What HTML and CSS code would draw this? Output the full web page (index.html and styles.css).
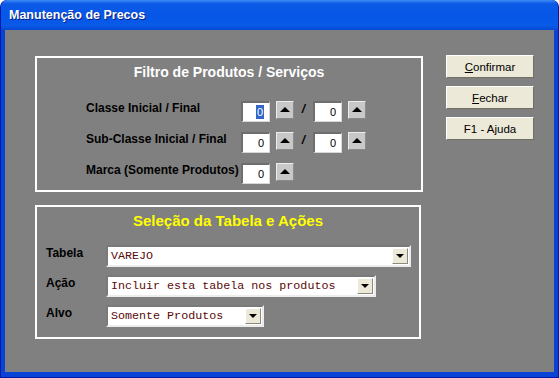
FILE: index.html
```html
<!DOCTYPE html>
<html lang="pt-BR">

<head>
    <meta charset="UTF-8">
    <title>Manutenção de Precos</title>
    <link rel="stylesheet" href="styles.css">
</head>

<body>
    <div class="janela">
        <div class="barra-titulo">Manutenção de Precos</div>

        <div class="cliente">
            <div class="principal">
                <!-- filtro -->
                <div class="painel painel-filtro">
                    <div class="titulo-painel">Filtro de Produtos / Serviços</div>
                    <div class="linhas-filtro">
                        <div class="linha">
                            <span class="rotulo">Classe Inicial / Final</span>
                            <div class="controles">
                                <div class="campo"><span class="selecionado">0</span></div>
                                <button class="seta"><span class="tri-cima"></span></button>
                                <span class="barra">/</span>
                                <div class="campo">0</div>
                                <button class="seta"><span class="tri-cima"></span></button>
                            </div>
                        </div>
                        <div class="linha">
                            <span class="rotulo">Sub-Classe Inicial / Final</span>
                            <div class="controles">
                                <div class="campo">0</div>
                                <button class="seta"><span class="tri-cima"></span></button>
                                <span class="barra">/</span>
                                <div class="campo">0</div>
                                <button class="seta"><span class="tri-cima"></span></button>
                            </div>
                        </div>
                        <div class="linha">
                            <span class="rotulo">Marca (Somente Produtos)</span>
                            <div class="controles">
                                <div class="campo">0</div>
                                <button class="seta"><span class="tri-cima"></span></button>
                            </div>
                        </div>
                    </div>
                </div>

                <!-- tabela e acoes -->
                <div class="painel painel-tabela">
                    <div class="titulo-painel amarelo">Seleção da Tabela e Ações</div>
                    <div class="linhas-tabela">
                        <div class="linha">
                            <span class="rotulo">Tabela</span>
                            <div class="combo combo-tabela">
                                <span class="texto-combo">VAREJO</span>
                                <span class="botao-combo"><span class="tri-baixo"></span></span>
                            </div>
                        </div>
                        <div class="linha">
                            <span class="rotulo">Ação</span>
                            <div class="combo combo-acao">
                                <span class="texto-combo">Incluir esta tabela nos produtos</span>
                                <span class="botao-combo"><span class="tri-baixo"></span></span>
                            </div>
                        </div>
                        <div class="linha">
                            <span class="rotulo">Alvo</span>
                            <div class="combo combo-alvo">
                                <span class="texto-combo">Somente Produtos</span>
                                <span class="botao-combo"><span class="tri-baixo"></span></span>
                            </div>
                        </div>
                    </div>
                </div>
            </div>

            <!-- botoes laterais -->
            <div class="botoes">
                <button class="botao"><u>C</u>onfirmar</button>
                <button class="botao"><u>F</u>echar</button>
                <button class="botao">F1 - Ajuda</button>
            </div>
        </div>
    </div>
</body>

</html>
```

FILE: styles.css
```css
/* Estilo global */
body {
    margin: 0;
    padding: 0;
    background-color: #ffffff;
    font-family: "Liberation Sans", Arial, sans-serif;
}

/* janela estilo XP */
.janela {
    width: 559px;
    height: 378px;
    box-sizing: border-box;
    background-color: #0843d6;
    border-radius: 7px 7px 0 0;
    padding: 0 4px 5px 4px;
    display: flex;
    flex-direction: column;
    border: 1px solid #0019a8;
    border-top: none;
}

.barra-titulo {
    height: 30px;
    margin: 0 -4px;
    padding-left: 8px;
    border-radius: 7px 7px 0 0;
    background: linear-gradient(#3e8cf6 0%, #0d5ae6 12%, #0656e8 50%, #0a5ae8 85%, #0648d4 100%);
    color: #ffffff;
    font-weight: bold;
    font-size: 12.5px;
    line-height: 31px;
    text-shadow: 1px 1px 0 #0a1e80;
}

.cliente {
    flex: 1;
    background-color: #808080;
    display: flex;
    padding: 26px 0 0 30px;
    gap: 23px;
}

.principal {
    display: flex;
    flex-direction: column;
    gap: 13px;
}

/* paineis */
.painel {
    border: 2px solid #ffffff;
    box-sizing: border-box;
}

.painel-filtro {
    width: 388px;
    height: 136px;
}

.painel-tabela {
    width: 386px;
    height: 134px;
}

.titulo-painel {
    text-align: center;
    color: #ffffff;
    font-weight: bold;
    font-size: 14px;
    padding-top: 6px;
    line-height: 17px;
}

.amarelo {
    color: #ffff00;
    font-size: 15px;
    padding-top: 5px;
}

.rotulo {
    font-weight: bold;
    font-size: 12px;
    color: #000000;
}

/* linhas do filtro */
.linhas-filtro {
    display: flex;
    flex-direction: column;
    gap: 9px;
    margin: 19px 0 0 49px;
}

.linhas-filtro .linha {
    display: grid;
    grid-template-columns: 155px auto;
    align-items: center;
    height: 22px;
}

.linhas-filtro .rotulo {
    margin-top: -6px;
    white-space: nowrap;
}

.controles {
    display: flex;
    align-items: flex-start;
}

.campo {
    width: 29px;
    height: 21px;
    box-sizing: border-box;
    background-color: #ffffff;
    border-top: 2px solid #6e6e6e;
    border-left: 2px solid #6e6e6e;
    border-right: 1px solid #d8d8d8;
    border-bottom: 1px solid #d8d8d8;
    text-align: right;
    padding-right: 5px;
    font-size: 11px;
    line-height: 18px;
    font-family: "Liberation Sans", Arial, sans-serif;
}

.selecionado {
    background-color: #3166c8;
    color: #ffffff;
    padding: 1px 1px;
}

.seta {
    width: 18px;
    height: 18px;
    margin-left: 6px;
    padding: 0;
    background-color: #c8c8c8;
    border-top: 1px solid #ececec;
    border-left: 1px solid #ececec;
    border-right: 1px solid #8a8a8a;
    border-bottom: 1px solid #8a8a8a;
    display: flex;
    align-items: center;
    justify-content: center;
}

.tri-cima {
    width: 0;
    height: 0;
    border-left: 5px solid transparent;
    border-right: 5px solid transparent;
    border-bottom: 5px solid #000000;
}

.barra {
    width: 19px;
    text-align: center;
    font-weight: bold;
    font-style: italic;
    font-size: 12px;
    line-height: 16px;
}

/* linhas da tabela */
.linhas-tabela {
    display: flex;
    flex-direction: column;
    gap: 8px;
    margin: 16px 0 0 9px;
}

.linhas-tabela .linha {
    display: grid;
    grid-template-columns: 60px auto;
    align-items: start;
    height: 22px;
}

.linhas-tabela .rotulo {
    font-size: 12px;
    margin-top: 1px;
}

.combo {
    height: 22px;
    box-sizing: border-box;
    background-color: #ffffff;
    border-top: 2px solid #7a7a7a;
    border-left: 2px solid #7a7a7a;
    border-right: 2px solid #ececec;
    border-bottom: 2px solid #ececec;
    display: flex;
    align-items: center;
    justify-content: space-between;
}

.combo-tabela {
    width: 305px;
}

.combo-acao {
    width: 270px;
}

.combo-alvo {
    width: 158px;
}

.texto-combo {
    font-family: "Liberation Mono", "Courier New", monospace;
    font-size: 11.7px;
    color: #5a0a0a;
    padding-left: 3px;
}

.botao-combo {
    width: 16px;
    height: 16px;
    margin-right: 1px;
    box-sizing: border-box;
    background-color: #ece9d8;
    border-top: 1px solid #ffffff;
    border-left: 1px solid #ffffff;
    border-right: 1px solid #8c8a80;
    border-bottom: 1px solid #8c8a80;
    display: flex;
    align-items: center;
    justify-content: center;
}

.tri-baixo {
    width: 0;
    height: 0;
    border-left: 4px solid transparent;
    border-right: 4px solid transparent;
    border-top: 4px solid #000000;
}

/* botoes laterais */
.botoes {
    display: flex;
    flex-direction: column;
    gap: 8px;
    margin-top: -1px;
}

.botao {
    width: 88px;
    height: 23px;
    background-color: #ece9d8;
    border-top: 1px solid #ffffff;
    border-left: 1px solid #ffffff;
    border-right: 1px solid #716f64;
    border-bottom: 1px solid #716f64;
    font-family: "Liberation Sans", Arial, sans-serif;
    font-size: 11.5px;
    color: #000000;
    padding: 0;
}
```
